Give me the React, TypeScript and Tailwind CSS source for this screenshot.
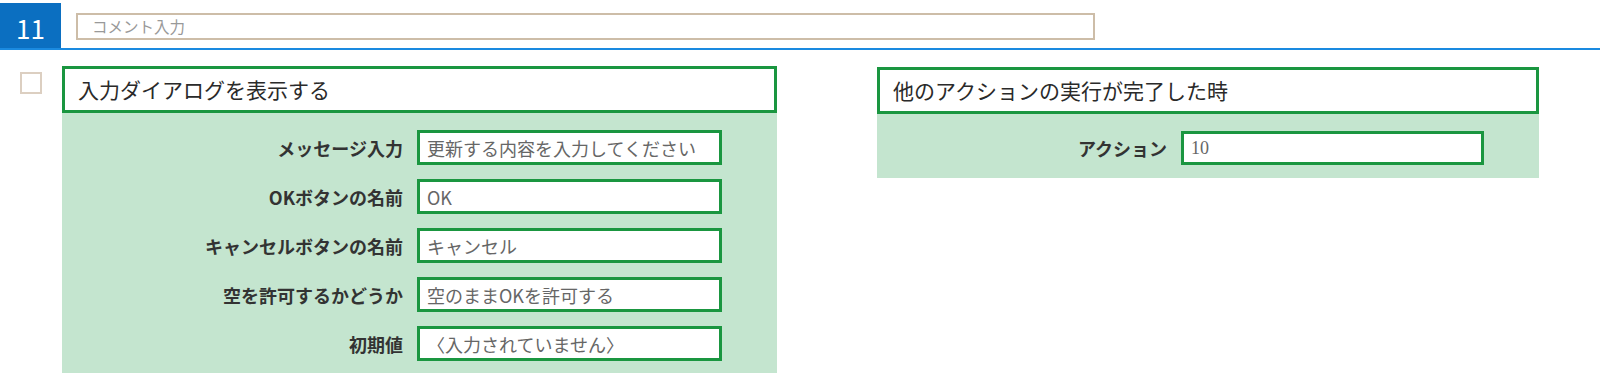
import { type ReactNode } from 'react'

const font = "font-['Noto_Sans_CJK_JP','Noto_Sans',sans-serif]"

function Field({ label, value }: { label: string; value: string }) {
  return (
    <div className="flex items-center">
      <div className="flex-1 pr-[14px] text-right text-[18px] font-bold leading-none text-[#333]">{label}</div>
      <div className="flex h-[35px] w-[305px] items-center border-[3px] border-[#1a9640] bg-white px-[7px] text-[18px] leading-none text-[#666]">
        {value}
      </div>
      <div className="w-[55px]" />
    </div>
  )
}

function Card({ title, width, children, pb }: { title: string; width: string; children: ReactNode; pb: string }) {
  return (
    <div className={width + ' bg-[#c4e5cf]'}>
      <div className="flex h-[47px] items-center border-[3px] border-[#1a9640] bg-white px-[13px] text-[21px] leading-none text-[#2a2a2a]">
        {title}
      </div>
      <div className={'flex flex-col gap-[14px] pt-[17px] ' + pb}>{children}</div>
    </div>
  )
}

export default function App() {
  return (
    <div className={'h-[379px] w-[1600px] overflow-hidden bg-white ' + font}>
      <div className="flex h-[50px] items-start border-b-2 border-[#1a8ae0]">
        <div className="mt-[3px] flex h-[45px] w-[61px] items-center justify-center bg-[#0b6fc1] pt-[5px] text-[26px] leading-none text-white">
          11
        </div>
        <div className="ml-[15px] mt-[13px] flex h-[27px] w-[1019px] items-center border-2 border-[#cdbda8] pl-[14px] text-[15.5px] leading-none text-[#999]">
          コメント入力
        </div>
      </div>

      <div className="flex items-start pt-[16px]">
        <div className="ml-[20px] mt-[6px] h-[22px] w-[22px] border-2 border-[#dccfc1]" />

        <div className="ml-[20px]">
          <Card title="入力ダイアログを表示する" width="w-[715px]" pb="pb-[12px]">
            <Field label="メッセージ入力" value="更新する内容を入力してください" />
            <Field label="OKボタンの名前" value="OK" />
            <Field label="キャンセルボタンの名前" value="キャンセル" />
            <Field label="空を許可するかどうか" value="空のままOKを許可する" />
            <Field label="初期値" value="〈入力されていません〉" />
          </Card>
        </div>

        <div className="ml-[100px] mt-[1px]">
          <Card title="他のアクションの実行が完了した時" width="w-[662px]" pb="pb-[13px]">
            <div className="flex items-center">
              <div className="flex-1 pr-[14px] text-right text-[18px] font-bold leading-none text-[#333]">アクション</div>
              <div className="flex h-[34px] w-[303px] items-center border-[3px] border-[#1a9640] bg-white px-[7px] font-['Liberation_Serif',serif] text-[18px] leading-none text-[#666]">
                10
              </div>
              <div className="w-[55px]" />
            </div>
          </Card>
        </div>
      </div>
    </div>
  )
}
